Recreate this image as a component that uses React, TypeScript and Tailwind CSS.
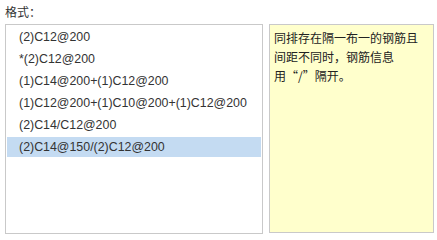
const items = [
  "(2)C12@200",
  "*(2)C12@200",
  "(1)C14@200+(1)C12@200",
  "(1)C12@200+(1)C10@200+(1)C12@200",
  "(2)C14/C12@200",
  "(2)C14@150/(2)C12@200",
];

export default function App() {
  const selected = 5;
  const cjk = { fontFamily: '"Noto Sans CJK SC", sans-serif' };
  return (
    <div
      className="w-[437px] h-[240px] bg-white text-[12px] text-[#333] pl-[5px]"
      style={{ fontFamily: '"Liberation Sans", "Noto Sans CJK SC", sans-serif' }}
    >
      <div className="h-[24px] leading-[24px]" style={cjk}>
        格式：
      </div>
      <div className="flex gap-[6px]">
        <div className="w-[258px] h-[210px] border border-[#c9c9c9] bg-white pt-[2px] px-[1px] text-[12.4px]">
          {items.map((item, i) => (
            <div
              key={item}
              className={
                "h-[20px] leading-[20px] mb-[2px] pl-[12px] " +
                (i === selected ? "bg-[#c4dbf2]" : "")
              }
            >
              {item}
            </div>
          ))}
        </div>
        <div
          className="w-[165px] h-[209px] border border-[#c9c9c9] bg-[#ffffcc] pl-[4px] pt-[3px] leading-[19px] text-[#222]"
          style={cjk}
        >
          同排存在隔一布一的钢筋且
          <br />
          间距不同时，钢筋信息
          <br />
          用“/”隔开。
        </div>
      </div>
    </div>
  );
}
